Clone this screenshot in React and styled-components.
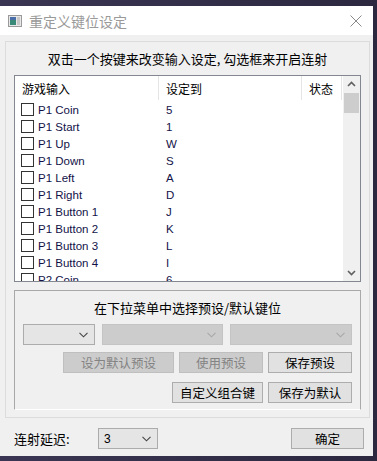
import React from 'react'
import styled, { createGlobalStyle } from 'styled-components'

const GlobalStyle = createGlobalStyle`
  html, body {
    margin: 0;
    padding: 0;
    background: linear-gradient(90deg, #3a3552, #2c2840);
    font-family: "Liberation Sans", "Noto Sans CJK SC", sans-serif;
  }
  #root {
    padding-top: 6px;
    height: 461px;
    box-sizing: border-box;
    overflow: hidden;
  }
`

const Window = styled.div`
  width: 373px;
  height: 450px;
  background: #f0f0f0;
  display: flex;
  flex-direction: column;
`

const TitleBar = styled.div`
  height: 29px;
  background: #ffffff;
  display: flex;
  align-items: center;
  padding: 0 8px;
  flex-shrink: 0;
`

const Title = styled.span`
  margin-left: 7px;
  font-family: "Noto Sans CJK SC", sans-serif;
  font-size: 14px;
  color: #9a9a9a;
  flex: 1;
`

const Close = styled.svg`
  width: 12px;
  height: 12px;
  margin-right: 3px;
`

const Body = styled.div`
  padding: 6px 3px 0 5px;
`

const Panel = styled.div`
  height: 377px;
  box-sizing: border-box;
  border: 1px solid #dcdcdc;
  padding: 0 8px;
  display: flex;
  flex-direction: column;
`

const Heading = styled.div`
  height: ${p => p.$h}px;
  display: flex;
  align-items: center;
  justify-content: center;
  font-family: "Noto Sans CJK SC", sans-serif;
  font-size: 13px;
  color: #000;
  flex-shrink: 0;
`

const ListView = styled.div`
  height: 207px;
  box-sizing: border-box;
  border: 1px solid #828790;
  background: #fff;
  display: flex;
  flex-shrink: 0;
`

const Table = styled.div`
  flex: 1;
  overflow: hidden;
`

const HeaderRow = styled.div`
  height: 25px;
  display: grid;
  grid-template-columns: 144px 143px 40px;
`

const HeaderCell = styled.div`
  display: flex;
  align-items: center;
  padding-left: 7px;
  border-right: 1px solid #e5e5e5;
  margin: 0 0 1px;
  font-family: "Noto Sans CJK SC", sans-serif;
  font-size: 12px;
  color: #000;
`

const Row = styled.div`
  height: 17px;
  display: grid;
  grid-template-columns: 144px 143px 40px;
  font-size: 11.5px;
  color: #121248;
`

const NameCell = styled.div`
  display: flex;
  align-items: center;
  padding-left: 6px;
  gap: 4px;
`

const Check = styled.span`
  width: 11px;
  height: 11px;
  border: 1px solid #333;
  background: #fff;
`

const ValueCell = styled.div`
  display: flex;
  align-items: center;
  padding-left: 7px;
`

const ScrollBar = styled.div`
  width: 17px;
  background: #f0f0f0;
  display: flex;
  flex-direction: column;
  align-items: center;
`

const Arrow = styled.svg`
  width: 17px;
  height: 17px;
  flex-shrink: 0;
`

const Thumb = styled.div`
  width: 15px;
  height: 20px;
  background: #cdcdcd;
`

const Track = styled.div`
  flex: 1;
`

const Group = styled.div`
  margin-top: 8px;
  height: 120px;
  box-sizing: border-box;
  border: 1px solid #a9a9a9;
  border-bottom-color: #ffffff;
  padding: 0 8px;
  display: flex;
  flex-direction: column;
`

const ComboRow = styled.div`
  display: flex;
  gap: 7px;
  margin-bottom: 7px;
`

const Combo = styled.div`
  width: ${p => p.$w}px;
  height: 21px;
  box-sizing: border-box;
  border: 1px solid ${p => (p.$disabled ? '#c4c4c4' : '#acacac')};
  background: ${p => (p.$disabled ? '#cccccc' : '#e5e5e5')};
  display: flex;
  align-items: center;
  padding: 0 6px 0 5px;
  font-size: 12px;
  color: #000;
`

const ComboText = styled.span`
  flex: 1;
`

const Chevron = styled.svg`
  width: 9px;
  height: 6px;
`

const ButtonRow = styled.div`
  display: flex;
  justify-content: flex-end;
  gap: 5px;
  margin-bottom: 9px;
`

const Button = styled.div`
  width: ${p => p.$w}px;
  height: 21px;
  box-sizing: border-box;
  border: 1px solid ${p => (p.$disabled ? '#bfbfbf' : '#adadad')};
  background: ${p => (p.$disabled ? '#cccccc' : '#e1e1e1')};
  color: ${p => (p.$disabled ? '#838383' : '#000')};
  display: flex;
  align-items: center;
  justify-content: center;
  font-family: "Noto Sans CJK SC", sans-serif;
  font-size: 12.5px;
`

const Footer = styled.div`
  display: flex;
  align-items: center;
  padding: 10px 6px 0 9px;
`

const Label = styled.span`
  width: 84px;
  font-family: "Noto Sans CJK SC", sans-serif;
  font-size: 13px;
  color: #000;
`

const Spacer = styled.div`
  flex: 1;
`

const rows = [
  ['P1 Coin', '5'],
  ['P1 Start', '1'],
  ['P1 Up', 'W'],
  ['P1 Down', 'S'],
  ['P1 Left', 'A'],
  ['P1 Right', 'D'],
  ['P1 Button 1', 'J'],
  ['P1 Button 2', 'K'],
  ['P1 Button 3', 'L'],
  ['P1 Button 4', 'I'],
  ['P2 Coin', '6'],
]

const Down = ({ color = '#444' }) => (
  <Chevron viewBox="0 0 9 6">
    <path d="M0.5 0.8 L4.5 4.8 L8.5 0.8" fill="none" stroke={color} strokeWidth="1.1" />
  </Chevron>
)

const App = () => {
  return (
    <>
      <GlobalStyle />
      <Window>
        <TitleBar>
          <svg width="14" height="12" viewBox="0 0 14 12">
            <rect x="0.5" y="0.5" width="13" height="11" fill="#e8e8e8" stroke="#9a9a9a" />
            <rect x="2" y="2" width="6" height="8" fill="#3a8a7a" />
            <rect x="2" y="2" width="6" height="3" fill="#4a6fa8" />
            <rect x="9" y="2" width="3" height="8" fill="#c8c8c8" />
          </svg>
          <Title>重定义键位设定</Title>
          <Close viewBox="0 0 12 12">
            <path d="M0.5 0.5 L11.5 11.5 M11.5 0.5 L0.5 11.5" stroke="#8a8a8a" strokeWidth="1" />
          </Close>
        </TitleBar>
        <Body>
          <Panel>
            <Heading $h={33}>双击一个按键来改变输入设定, 勾选框来开启连射</Heading>
            <ListView>
              <Table>
                <HeaderRow>
                  <HeaderCell>游戏输入</HeaderCell>
                  <HeaderCell>设定到</HeaderCell>
                  <HeaderCell>状态</HeaderCell>
                </HeaderRow>
                {rows.map(([name, key]) => (
                  <Row key={name}>
                    <NameCell>
                      <Check />
                      {name}
                    </NameCell>
                    <ValueCell>{key}</ValueCell>
                    <div />
                  </Row>
                ))}
              </Table>
              <ScrollBar>
                <Arrow viewBox="0 0 17 17">
                  <path d="M5 10 L8.5 6.5 L12 10" fill="none" stroke="#606060" strokeWidth="1.6" />
                </Arrow>
                <Thumb />
                <Track />
                <Arrow viewBox="0 0 17 17">
                  <path d="M5 7 L8.5 10.5 L12 7" fill="none" stroke="#606060" strokeWidth="1.6" />
                </Arrow>
              </ScrollBar>
            </ListView>
            <Group>
              <Heading $h={33}>在下拉菜单中选择预设/默认键位</Heading>
              <ComboRow>
                <Combo $w={72}>
                  <ComboText />
                  <Down />
                </Combo>
                <Combo $w={122} $disabled>
                  <ComboText />
                  <Down color="#a8a8a8" />
                </Combo>
                <Combo $w={122} $disabled>
                  <ComboText />
                  <Down color="#a8a8a8" />
                </Combo>
              </ComboRow>
              <ButtonRow>
                <Button $w={111} $disabled>设为默认预设</Button>
                <Button $w={84} $disabled>使用预设</Button>
                <Button $w={84}>保存预设</Button>
              </ButtonRow>
              <ButtonRow>
                <Button $w={91}>自定义组合键</Button>
                <Button $w={84}>保存为默认</Button>
              </ButtonRow>
            </Group>
          </Panel>
          <Footer>
            <Label>连射延迟:</Label>
            <Combo $w={60}>
              <ComboText>3</ComboText>
              <Down />
            </Combo>
            <Spacer />
            <Button $w={73}>确定</Button>
          </Footer>
        </Body>
      </Window>
    </>
  )
}

export default App
